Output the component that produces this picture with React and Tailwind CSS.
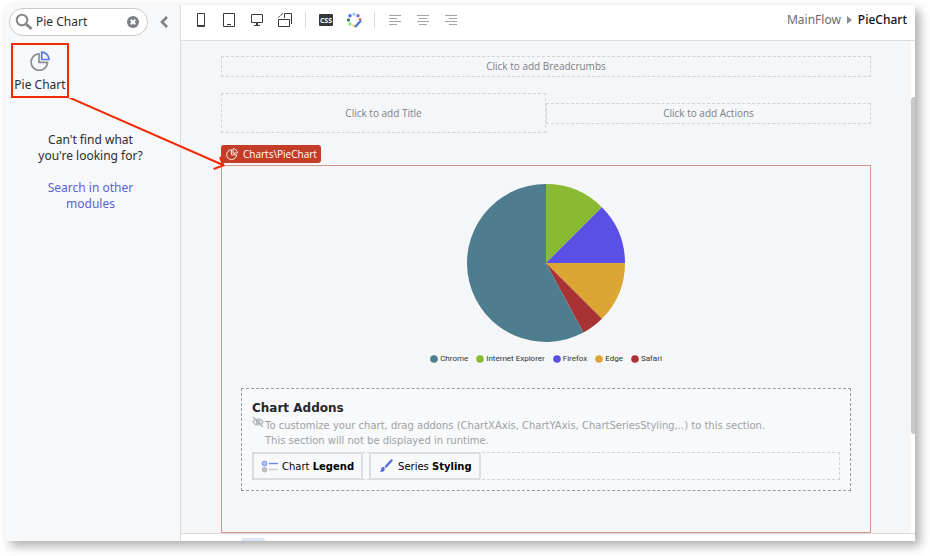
import React from "react";

const SLICES = [
  { name: "Internet Explorer", from: 0, to: 45, color: "#8aba32" },
  { name: "Firefox", from: 45, to: 90, color: "#5a50e6" },
  { name: "Edge", from: 90, to: 135, color: "#dca635" },
  { name: "Safari", from: 135, to: 151.8, color: "#a93234" },
  { name: "Chrome", from: 151.8, to: 360, color: "#4d7d8f" },
];

const LEGEND = ["Chrome", "Internet Explorer", "Firefox", "Edge", "Safari"];

function slicePath({ from, to }, r) {
  const point = (deg) => {
    const a = ((deg - 90) * Math.PI) / 180;
    return `${(80 + r * Math.cos(a)).toFixed(2)} ${(80 + r * Math.sin(a)).toFixed(2)}`;
  };
  return `M80 80L${point(from)}A${r} ${r} 0 ${to - from > 180 ? 1 : 0} 1 ${point(to)}Z`;
}

function PieIcon({ className, accent = "currentColor", width = 1.7 }) {
  return (
    <svg viewBox="0 0 20 20" className={className} fill="none" strokeWidth={width} aria-hidden="true">
      <path d="M9 2.900a8.200 8.200 0 1 0 8.500 8.500H9z" stroke="currentColor" />
      <path d="M11.700 1.200v7.300h7.300a7.300 7.300 0 0 0-7.300-7.300z" stroke={accent} />
    </svg>
  );
}

function ToolButton({ label, children }) {
  return (
    <button type="button" aria-label={label} className="flex h-7 w-7 items-center justify-center text-[#3a3a3e]">
      <svg viewBox="0 0 16 16" className="h-4 w-4" fill="none" stroke="currentColor" aria-hidden="true">
        {children}
      </svg>
    </button>
  );
}

function Divider() {
  return <span className="mx-[6px] h-4 w-px bg-[#dcdde0]" />;
}

function Toolbar() {
  return (
    <header className="flex h-9 items-start border-b border-[#dcdddf] bg-white pr-2 pl-[6px]">
      <div className="flex h-[30px] items-center">
        <ToolButton label="Phone">
          <path d="M4.500 1.500h7v13h-7zM4 13.500h8" />
        </ToolButton>
        <ToolButton label="Tablet">
          <path d="M2.500 1.500h11v13h-11zM6 12.500h4" />
        </ToolButton>
        <ToolButton label="Desktop">
          <path d="M2.500 2.500h11v8h-11zM5 13.500h6M7 11.500h2M7 12.500h2" />
        </ToolButton>
        <ToolButton label="Rotate screen">
          <path d="M1.500 7.500h11v7h-11zM7.500 6V1.500h7V12M1.500 5.500l1-1.500M3.500 3.500L6 1.500" />
        </ToolButton>
        <Divider />
        <ToolButton label="CSS">
          <rect x="1" y="2" width="14" height="12" rx="1" fill="#36373b" stroke="none" />
          <text x="8" y="10.500" textAnchor="middle" fill="#fff" stroke="none" className="font-['Open_Sans',sans-serif] text-[7px] font-bold">CSS</text>
        </ToolButton>
        <ToolButton label="Theme">
          <g stroke="none">
            <circle cx="8" cy="2.200" r="1.600" fill="#8fd0ef" />
            <circle cx="4" cy="3.800" r="1.700" fill="#4f6fe3" />
            <circle cx="12" cy="3.800" r="1.700" fill="#8a63d8" />
            <circle cx="2.500" cy="8" r="1.700" fill="#43806a" />
            <circle cx="4" cy="12" r="1.700" fill="#8ce08e" />
            <circle cx="7.600" cy="13.800" r="1.500" fill="#f3dc6d" />
            <circle cx="14" cy="7.400" r="1.400" fill="#de6f6f" />
          </g>
          <path d="M9 15l6-6.500" stroke="#4f6fe3" strokeWidth="2.200" />
        </ToolButton>
        <Divider />
        <ToolButton label="Align left">
          <path d="M2 3.500h12M2 6.500h8M2 9.500h12M2 12.500h8" stroke="#a3a4a8" />
        </ToolButton>
        <ToolButton label="Align centre">
          <path d="M2 3.500h12M4 6.500h8M2 9.500h12M4 12.500h8" stroke="#a3a4a8" />
        </ToolButton>
        <ToolButton label="Align right">
          <path d="M2 3.500h12M6 6.500h8M2 9.500h12M6 12.500h8" stroke="#a3a4a8" />
        </ToolButton>
      </div>
      <nav aria-label="Location" className="ml-auto flex h-[30px] items-center gap-[6px] text-[12px]">
        <a href="#mainflow" className="text-[#6b6c70]">MainFlow</a>
        <svg viewBox="0 0 5 8" className="h-2 w-[5px]" aria-hidden="true"><path d="M0 0l5 4-5 4z" fill="#8a8c92" /></svg>
        <span className="font-medium text-[#101213]">PieChart</span>
      </nav>
    </header>
  );
}

function Sidebar() {
  return (
    <aside className="w-44 shrink-0 border-r border-[#dcdddf] bg-[#f6f8fa] pt-[3px] pl-1 text-[12px] leading-4 text-[#2b2d30]">
      <div className="flex items-center gap-2">
        <label className="flex h-7 w-[139px] items-center rounded-full border border-[#c9cacd] bg-white pr-2 pl-[5px]">
          <svg viewBox="0 0 18 18" className="h-[18px] w-[18px] shrink-0" fill="none" stroke="#85878b" aria-hidden="true">
            <circle cx="7" cy="7" r="5.300" strokeWidth="2" />
            <path d="M11 11l5.500 5" strokeWidth="3" />
          </svg>
          <input type="text" aria-label="Search" defaultValue="Pie Chart" className="ml-[3px] min-w-0 flex-1 bg-transparent outline-none" />
          <button type="button" aria-label="Clear search" className="shrink-0">
            <svg viewBox="0 0 12 12" className="h-3 w-3" aria-hidden="true">
              <circle cx="6" cy="6" r="6" fill="#7c7f83" />
              <path d="M3.700 3.700l4.600 4.600M8.300 3.700l-4.600 4.600" stroke="#fff" strokeWidth="2" />
            </svg>
          </button>
        </label>
        <button type="button" aria-label="Collapse panel" className="flex h-7 w-4 items-center justify-center">
          <svg viewBox="0 0 8 12" className="h-3 w-2" fill="none" stroke="#7c7f83" strokeWidth="2.600" aria-hidden="true">
            <path d="M7 1L2 6l5 5" />
          </svg>
        </button>
      </div>
      <div className="relative mt-[7px] ml-[2px] w-[58px]">
        <button type="button" className="flex h-[55px] w-full flex-col items-center border-2 border-[#f02b04] pt-[6px] whitespace-nowrap">
          <PieIcon className="h-5 w-5 text-[#8b8d91]" accent="#5b78ea" />
          <span className="mt-[6px]">Pie Chart</span>
        </button>
        <svg viewBox="0 0 160 76" className="pointer-events-none absolute top-full left-full z-10 h-[76px] w-40" fill="none" stroke="#f02b04" strokeWidth="2" aria-hidden="true">
          <path d="M-1-1L154 67M151 59l3.500 8.500-10 3.500" />
        </svg>
      </div>
      <div className="mt-[34px] mr-2 text-center">
        <p className="mx-auto w-28">Can't find what you're looking for?</p>
        <a href="#modules" className="mx-auto mt-4 block w-[100px] text-[#5c5fd6]">Search in other modules</a>
      </div>
    </aside>
  );
}

function Placeholder({ children, className }) {
  return (
    <button type="button" className={`flex items-center justify-center border border-dashed border-[#d3d4d7] text-[10px] text-[#7e8084] ${className}`}>
      {children}
    </button>
  );
}

function PieChart() {
  return (
    <figure className="flex flex-col items-center">
      <svg viewBox="0 0 160 160" className="h-40 w-40" role="img" aria-label="Browser share">
        {SLICES.map((s) => <path key={s.name} d={slicePath(s, 79)} fill={s.color} />)}
      </svg>
      <figcaption className="mt-[11px] flex gap-2 font-[Roboto,sans-serif] text-[8px] leading-[10px] text-[#333]">
        {LEGEND.map((name) => (
          <span key={name} className="flex items-center gap-[2px]">
            <svg viewBox="0 0 8 8" className="h-2 w-2" aria-hidden="true">
              <circle cx="4" cy="4" r="3.800" fill={SLICES.find((s) => s.name === name).color} />
            </svg>
            {name}
          </span>
        ))}
      </figcaption>
    </figure>
  );
}

function Addons() {
  return (
    <section className="mt-6 border border-dashed border-[#9b9ca0] bg-[#f7f9fb] px-[10px] pt-[11px] pb-[10px] font-['DejaVu_Sans',Verdana,sans-serif]">
      <h2 className="text-[12px] leading-4 font-bold text-[#25282b]">Chart Addons</h2>
      <div className="flex text-[10px] leading-[15px] text-[#a0a1a4]">
        <svg viewBox="0 0 12 12" className="mr-px h-3 w-3 shrink-0" fill="none" stroke="#b0b1b4" strokeWidth="1.200" aria-hidden="true">
          <path d="M1 6c2.500-4 7.500-4 10 0-2.500 4-7.500 4-10 0zM1 1l10 10" />
          <circle cx="6" cy="6" r="1.700" />
        </svg>
        <p className="mt-[2px]">
          To customize your chart, drag addons (ChartXAxis, ChartYAxis, ChartSeriesStyling,..) to this section.
          <br />
          This section will not be displayed in runtime.
        </p>
      </div>
      <div className="mt-1 flex h-7 gap-[6px] border border-dashed border-[#d3d4d7] text-[10px] text-black">
        <button type="button" className="-my-px -ml-px flex items-center gap-1 rounded-[3px] border-2 border-[#dcdde3] bg-[#f8f9fb] px-[7px]">
          <svg viewBox="0 0 17 13" className="h-[13px] w-[17px]" fill="none" aria-hidden="true">
            <circle cx="3.500" cy="3.500" r="2.300" fill="#b9c6f7" stroke="#6f88ee" />
            <circle cx="3.500" cy="9.700" r="2.300" fill="#c4c5c8" stroke="#b0b1b4" />
            <path d="M8 3.500h9" stroke="#6f88ee" strokeWidth="1.400" />
            <path d="M8 9.500h9" stroke="#c9cacd" strokeWidth="1.400" />
          </svg>
          <span>Chart <b>Legend</b></span>
        </button>
        <button type="button" className="-my-px flex items-center gap-1 rounded-[3px] border-2 border-[#dcdde3] bg-[#f8f9fb] px-[7px]">
          <svg viewBox="0 0 16 14" className="h-[14px] w-4" fill="none" aria-hidden="true">
            <path d="M13.500 1.500L8 7.500" stroke="#4f6fe8" strokeWidth="2.400" strokeLinecap="round" />
            <path d="M6.300 8.200c-2.500-.8-3.300 1-3.300 2.500 0 .8-.6 1.300-1.300 1.500 2.600 1.300 6.300.3 4.600-4z" fill="#4f6fe8" />
          </svg>
          <span>Series <b>Styling</b></span>
        </button>
      </div>
    </section>
  );
}

export default function App() {
  return (
    <div className="flex min-h-screen bg-white pt-[5px] pr-[15px] pb-[15px] pl-[5px] font-['Noto_Sans',sans-serif]">
      <div className="flex min-w-0 flex-1 shadow-[5px_5px_10px_rgba(0,0,0,0.32)]">
        <Sidebar />
        <main className="flex min-w-0 flex-1 flex-col bg-white">
          <Toolbar />
          <div className="flex flex-1">
            <div className="flex min-w-0 flex-1 flex-col bg-[#f4f6f8] px-10 pt-[15px] font-['Open_Sans',sans-serif]">
              <Placeholder className="h-[21px] w-full">Click to add Breadcrumbs</Placeholder>
              <div className="mt-4 flex items-center">
                <Placeholder className="h-10 flex-1">Click to add Title</Placeholder>
                <Placeholder className="h-[21px] flex-1">Click to add Actions</Placeholder>
              </div>
              <div className="mt-3 flex">
                <span className="flex h-[18px] items-center gap-[5px] rounded-[3px] bg-[#c43d29] px-1 pl-[5px] text-[10px] text-white">
                  <PieIcon className="h-3 w-3" width={1.5} />
                  Charts\PieChart
                </span>
              </div>
              <div className="mt-[2px] flex-1 border border-[#d3948d] px-[19px] pt-[17px] pb-10">
                <PieChart />
                <Addons />
              </div>
            </div>
            <div className="w-1 bg-white pt-14" aria-hidden="true">
              <div className="h-[337px] rounded-l-[3px] bg-[#c8c9cc]" />
            </div>
          </div>
          <footer className="flex h-2 items-end border-t border-[#dcdddf] pl-[60px]">
            <span className="h-[3px] w-6 rounded-t-[3px] bg-[#dce5fa]" />
          </footer>
        </main>
      </div>
    </div>
  );
}
